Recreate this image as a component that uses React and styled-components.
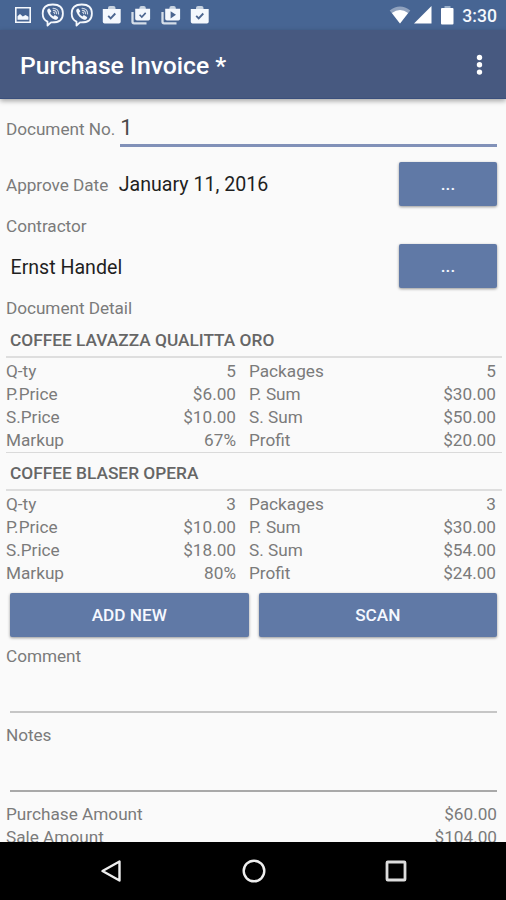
import React from "react"
import styled, { createGlobalStyle } from "styled-components"

const GlobalStyle = createGlobalStyle`
  * {
    box-sizing: border-box;
  }
  body {
    margin: 0;
    background-color: #fafafa;
    font-family: Roboto, "Noto Sans", sans-serif;
  }
`

const Screen = styled.div`
  display: flex;
  flex-direction: column;
  width: 506px;
  height: 900px;
  overflow: hidden;
  background-color: #fafafa;
  color: #7b7b7b;
  font-size: 17.2px;
`

const StatusBar = styled.div`
  display: flex;
  flex: none;
  align-items: center;
  justify-content: space-between;
  height: 30px;
  padding: 0 9px 0 8px;
  background-color: #476593;
  color: #f4f8fd;
`

const Notifications = styled.div`
  display: flex;
  svg {
    display: block;
    width: 29.5px;
    height: 24px;
  }
`

const SystemIcons = styled.div`
  display: flex;
  align-items: center;
  svg {
    display: block;
  }
  svg + svg {
    margin-left: 3px;
  }
  svg + svg + svg {
    margin-left: 9px;
  }
`

const Clock = styled.span`
  margin: 2px 0 0 8px;
  font-size: 17.6px;
  font-weight: 500;
  line-height: 30px;
`

const TopBar = styled.div`
  display: flex;
  flex: none;
  align-items: center;
  justify-content: space-between;
  height: 69px;
  padding: 0 23px 0 20px;
  background-color: #475980;
  border-bottom: 1px solid #3a4f7c;
  box-shadow: 0 2px 5px rgba(0, 0, 0, 0.35);
  z-index: 1;
  h1 {
    margin: 4px 0 0;
    color: #fff;
    font-size: 24.7px;
    font-weight: 500;
    line-height: 30px;
    white-space: nowrap;
  }
`

const Form = styled.div`
  flex: 1;
  min-height: 0;
  overflow: hidden;
  padding: 12px 4px 0 6px;
`

const Label = styled.div`
  height: 23px;
  margin-top: ${({ $top }) => $top || 0}px;
  line-height: 23px;
  letter-spacing: -0.05px;
  white-space: nowrap;
`

const FieldRow = styled.div`
  display: flex;
  align-items: center;
  height: ${({ $height }) => $height || 44}px;
  margin-top: ${({ $top }) => $top || 0}px;
  padding-right: 5px;
`

const NumberInput = styled.div`
  flex: 1;
  height: 36px;
  margin-left: 5px;
  border-bottom: 3px solid #8191b8;
  color: #4a4a4a;
  font-size: 22px;
  line-height: 34px;
`

const Value = styled.div`
  flex: 1;
  margin-left: ${({ $left }) => $left}px;
  padding-top: ${({ $drop }) => $drop || 0}px;
  color: #1f1f1f;
  font-size: 19.6px;
  line-height: 26px;
  white-space: nowrap;
`

const Button = styled.div`
  display: flex;
  align-items: center;
  justify-content: center;
  flex: ${({ $width }) => ($width ? "none" : 1)};
  width: ${({ $width }) => ($width ? `${$width}px` : "auto")};
  height: 44px;
  border-radius: 2px;
  background-color: #6079a6;
  box-shadow: 0 1px 3px rgba(0, 0, 0, 0.4);
  color: #f5f8ff;
  font-size: 17.2px;
  font-weight: 500;
`

const ButtonRow = styled.div`
  display: flex;
  gap: 10px;
  margin-top: 7px;
  padding: 0 5px 0 4px;
`

const GroupTitle = styled.div`
  height: 38px;
  padding-left: 4px;
  border-bottom: 2px solid #dedede;
  color: #666;
  font-size: 17.3px;
  font-weight: 500;
  line-height: 40px;
  white-space: nowrap;
`

const Details = styled.div`
  display: grid;
  grid-template-columns: 115px 115px 124px 136px;
  grid-auto-rows: 23.25px;
  height: 95px;
  padding-top: 1.5px;
  border-bottom: ${({ $last }) => ($last ? "none" : "1px solid #dadada")};
  line-height: 23px;
  white-space: nowrap;
`

const Cell = styled.span`
  text-align: ${({ $right }) => ($right ? "right" : "left")};
  padding-left: ${({ $indent }) => ($indent ? 13 : 0)}px;
`

const TextArea = styled.div`
  height: ${({ $height }) => $height}px;
  margin: 0 5px 0 4px;
  border-bottom: 2px solid ${({ $color }) => $color};
`

const TotalRow = styled.div`
  display: flex;
  justify-content: space-between;
  height: 23.25px;
  margin-top: ${({ $top }) => $top || 0}px;
  padding-right: 5px;
  line-height: 23px;
`

const NavBar = styled.div`
  display: flex;
  flex: none;
  align-items: center;
  justify-content: center;
  gap: 118px;
  height: 58px;
  padding-left: 2px;
  background-color: #000;
  svg {
    display: block;
  }
`

const ImageIcon = () => (
  <svg viewBox="-4 0 29.5 24" fill="currentColor">
    <path
      fillRule="evenodd"
      d="M3 4h16v16H3zM4.600 5.600v12.800h12.800V5.600zM5.500 16.800v-3.500l2.500-2.300 2.800 2.500 2.700-1.500 3 1.800v3z"
    />
  </svg>
)

const ViberIcon = () => (
  <svg viewBox="0 0 29.5 24" fill="none" stroke="currentColor">
    <path
      strokeWidth="1.800"
      strokeLinejoin="round"
      d="M14.800 1.500C8 1.500 4.700 4.500 4.700 10.500c0 4 1.500 6.800 4.800 8.200V22.500l3.500-3.100c8.400.3 11.900-2.600 11.900-8.900 0-6-3.300-9-10.100-9z"
    />
    <path
      fill="currentColor"
      stroke="none"
      d="M10.900 5.600c-1.500.7-2 1.700-1.500 3.100 1.500 4 4 6.500 7.700 8 1.400.4 2.400-.4 3-1.700.2-.6 0-.9-.5-1.300l-2-1.300c-.5-.3-1-.2-1.300.2l-.7.8c-1.800-.6-3-1.800-3.500-3.600l.8-.7c.4-.4.500-.8.2-1.300l-1.300-1.900c-.3-.4-.5-.5-.9-.3z"
    />
    <path
      strokeWidth="1.100"
      strokeLinecap="round"
      strokeOpacity="0.8"
      d="M15 5.300c3.400.1 5.600 2.200 5.600 5.700M15.300 7.400c2 .1 3.200 1.400 3.300 3.400M15.600 9.300c.7.100 1 .5 1.100 1.300"
    />
  </svg>
)

const BagIcon = () => (
  <svg viewBox="0 0 29.5 24">
    <path
      fill="#c9d3df"
      d="M11 6.500V5q0-2 2-2h3.500q2 0 2 2v1.500z"
    />
    <path
      fill="currentColor"
      d="M5.800 6h17.900v12.700q0 1.800-1.800 1.800H7.600q-1.800 0-1.800-1.800z"
    />
    <path
      fill="none"
      stroke="#4c6690"
      strokeWidth="1.900"
      d="M11.200 12.800l2.500 2.500 4.600-4.800"
    />
  </svg>
)

const BagStackIcon = ({ play }) => (
  <svg viewBox="0 0 29.5 24">
    <path
      fill="none"
      stroke="#d5dee9"
      strokeWidth="2.300"
      d="M6.500 9v9.700q0 1.600 1.600 1.600h12.400"
    />
    <path
      fill="#c9d3df"
      d="M13.400 6.500V5q0-2 2-2h2.400q2 0 2 2v1.500z"
    />
    <path
      fill="currentColor"
      d="M9.200 5.800h14.900v9.900q0 1.800-1.800 1.800H11q-1.800 0-1.800-1.800z"
    />
    {play ? (
      <path fill="#4c6690" d="M14.600 8.200v7.200l5.400-3.600z" />
    ) : (
      <path
        fill="none"
        stroke="#4c6690"
        strokeWidth="1.600"
        d="M13.600 11.800l2.200 2.200 3.900-4.100"
      />
    )}
  </svg>
)

const WifiIcon = () => (
  <svg width="22" height="18" viewBox="0 0 22 18">
    <path
      fill="#fff"
      fillOpacity="0.4"
      d="M11 17.500L.7 4.500Q11-3.500 21.300 4.500z"
    />
    <path fill="#fff" d="M11 17.500L2.900 7Q11 1.200 19.100 7z" />
  </svg>
)

const SignalIcon = () => (
  <svg width="18" height="18" viewBox="0 0 18 18">
    <path fill="#fff" d="M0 17.500L17.500 0v17.500z" />
  </svg>
)

const BatteryIcon = () => (
  <svg width="13" height="19" viewBox="0 0 13 19">
    <path fill="#9bb0ca" d="M3.500 0h6v3h-6z" />
    <rect y="2" width="12.500" height="16.500" rx="1" fill="#fff" />
  </svg>
)

const MenuIcon = () => (
  <svg width="7" height="22" viewBox="0 0 7 22" fill="#fff">
    <circle cx="3.500" cy="4.500" r="2.700" />
    <circle cx="3.500" cy="11.800" r="2.700" />
    <circle cx="3.500" cy="19.100" r="2.700" />
  </svg>
)

const items = [
  {
    name: "COFFEE LAVAZZA QUALITTA ORO",
    rows: [
      ["Q-ty", "5", "Packages", "5"],
      ["P.Price", "$6.00", "P. Sum", "$30.00"],
      ["S.Price", "$10.00", "S. Sum", "$50.00"],
      ["Markup", "67%", "Profit", "$20.00"],
    ],
  },
  {
    name: "COFFEE BLASER OPERA",
    rows: [
      ["Q-ty", "3", "Packages", "3"],
      ["P.Price", "$10.00", "P. Sum", "$30.00"],
      ["S.Price", "$18.00", "S. Sum", "$54.00"],
      ["Markup", "80%", "Profit", "$24.00"],
    ],
  },
]

const App = () => (
  <Screen>
    <GlobalStyle />
    <StatusBar>
      <Notifications>
        <ImageIcon />
        <ViberIcon />
        <ViberIcon />
        <BagIcon />
        <BagStackIcon />
        <BagStackIcon play />
        <BagIcon />
      </Notifications>
      <SystemIcons>
        <WifiIcon />
        <SignalIcon />
        <BatteryIcon />
        <Clock>3:30</Clock>
      </SystemIcons>
    </StatusBar>
    <TopBar>
      <h1>Purchase Invoice *</h1>
      <MenuIcon />
    </TopBar>
    <Form>
      <FieldRow $height={36}>
        <Label>Document No.</Label>
        <NumberInput>1</NumberInput>
      </FieldRow>
      <FieldRow $top={15}>
        <Label $top={2}>Approve Date</Label>
        <Value $left={10.5} $drop={2}>
          January 11, 2016
        </Value>
        <Button $width={98}>...</Button>
      </FieldRow>
      <Label $top={9}>Contractor</Label>
      <FieldRow $top={6}>
        <Value $left={4.5} $drop={4}>
          Ernst Handel
        </Value>
        <Button $width={98}>...</Button>
      </FieldRow>
      <Label $top={9}>Document Detail</Label>
      {items.map((item, index) => (
        <React.Fragment key={item.name}>
          <GroupTitle>{item.name}</GroupTitle>
          <Details $last={index === items.length - 1}>
            {item.rows.map(row =>
              row.map((text, i) => (
                <Cell key={row[0] + i} $right={i % 2 === 1} $indent={i === 2}>
                  {text}
                </Cell>
              ))
            )}
          </Details>
        </React.Fragment>
      ))}
      <ButtonRow>
        <Button>ADD NEW</Button>
        <Button>SCAN</Button>
      </ButtonRow>
      <Label $top={8}>Comment</Label>
      <TextArea $height={45} $color="#c6c6c6" />
      <Label $top={11}>Notes</Label>
      <TextArea $height={45} $color="#a9a9a9" />
      <TotalRow $top={11}>
        <span>Purchase Amount</span>
        <span>$60.00</span>
      </TotalRow>
      <TotalRow>
        <span>Sale Amount</span>
        <span>$104.00</span>
      </TotalRow>
    </Form>
    <NavBar>
      <svg width="24" height="24" viewBox="0 0 24 24">
        <path
          d="M2.500 12L19.500 2.500v19z"
          fill="none"
          stroke="#eee"
          strokeWidth="2.400"
          strokeLinejoin="round"
        />
      </svg>
      <svg width="24" height="24" viewBox="0 0 24 24">
        <circle
          cx="12"
          cy="12"
          r="10.300"
          fill="none"
          stroke="#eee"
          strokeWidth="2.400"
        />
      </svg>
      <svg width="24" height="24" viewBox="0 0 24 24">
        <rect
          x="3"
          y="3"
          width="18"
          height="18"
          rx="0.800"
          fill="none"
          stroke="#ddd"
          strokeWidth="2.800"
        />
      </svg>
    </NavBar>
  </Screen>
)

export default App
